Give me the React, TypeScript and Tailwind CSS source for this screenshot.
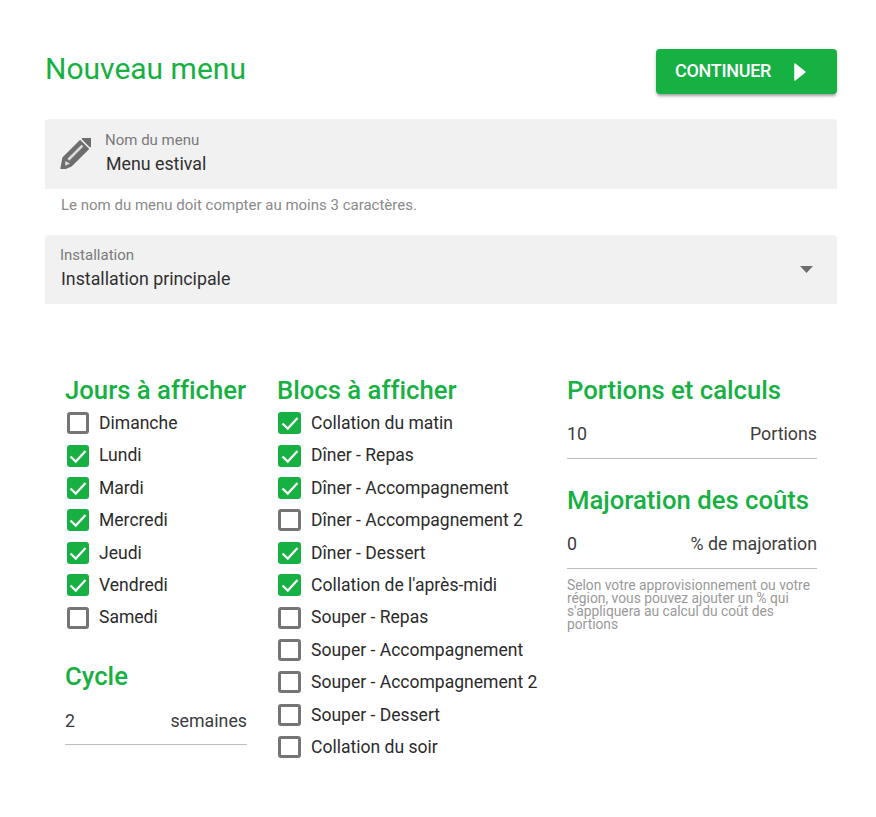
const days: [string, boolean][] = [
  ["Dimanche", false],
  ["Lundi", true],
  ["Mardi", true],
  ["Mercredi", true],
  ["Jeudi", true],
  ["Vendredi", true],
  ["Samedi", false],
];

const blocks: [string, boolean][] = [
  ["Collation du matin", true],
  ["Dîner - Repas", true],
  ["Dîner - Accompagnement", true],
  ["Dîner - Accompagnement 2", false],
  ["Dîner - Dessert", true],
  ["Collation de l'après-midi", true],
  ["Souper - Repas", false],
  ["Souper - Accompagnement", false],
  ["Souper - Accompagnement 2", false],
  ["Souper - Dessert", false],
  ["Collation du soir", false],
];

function Check({ label, checked, wide }: { label: string; checked: boolean; wide?: boolean }) {
  const size = wide ? "ml-px h-[22px] w-[23px]" : "ml-[2px] h-[22px] w-[22px]";
  return (
    <div className="flex h-[32.4px] items-center">
      {checked ? (
        <span className={`flex items-center justify-center rounded-[3px] bg-[#16b043] ${size}`}>
          <svg viewBox="0 0 22 22" className="h-[22px] w-[22px]" fill="none" stroke="#fff" strokeWidth="2.2">
            <path d="M3.5 11.5 L8.8 16.6 L18.5 6" />
          </svg>
        </span>
      ) : (
        <span className={`rounded-[3px] border-[3px] border-[#757575] ${size}`} />
      )}
      <span className="ml-[10px] whitespace-nowrap text-[17.55px] text-[#2b2b2b]">{label}</span>
    </div>
  );
}

function Heading({ children }: { children: string }) {
  return (
    <h2 className="h-[32px] whitespace-nowrap text-[25.7px] leading-[32px] font-medium text-[#16b043] [font-variant-ligatures:none]">
      {children}
    </h2>
  );
}

function NumberField({ value, unit, className }: { value: string; unit: string; className: string }) {
  return (
    <div className={`flex items-start justify-between border-b border-[#bdbdbd] text-[17.8px] leading-[24px] text-[#3c3c3c] ${className}`}>
      <span>{value}</span>
      <span>{unit}</span>
    </div>
  );
}

function Pencil() {
  return (
    <svg viewBox="0 0 31 31" className="mt-[19px] h-[31px] w-[31px] shrink-0">
      <g transform="translate(15.5 15.5) rotate(-45)">
        <rect x="14.5" y="-6.5" width="7.5" height="13" rx="2" fill="#6e6e6e" />
        <path d="M-12 -6.5 H13 V6.5 H-12 L-20.5 3 L-21.5 0 Z" fill="#6e6e6e" />
        <path d="M-9.5 -2 H10.5 V0.6 H-9.5 Z" fill="#dcdcdc" />
        <path d="M-16 1.5 L-12.5 -2 L-11 3.2 Z" fill="#dcdcdc" />
      </g>
    </svg>
  );
}

export default function App() {
  return (
    <div className="h-[817px] w-[876px] bg-white pt-[49px] pr-[39px] pl-[45px] font-['Roboto',sans-serif]">
      <header className="flex h-[45px] items-start justify-between">
        <h1 className="mt-[2px] text-[30px] leading-[36px] font-normal text-[#16b043]">Nouveau menu</h1>
        <button className="flex h-[45px] w-[181px] items-center rounded-[4px] bg-[#16b043] pb-[2px] pl-[19px] text-[18px] font-medium tracking-[-0.3px] text-white shadow-[0_3px_3px_-1px_rgba(0,0,0,0.3),0_1px_4px_rgba(0,0,0,0.15)]">
          CONTINUER
          <svg viewBox="0 0 12 18" className="mt-[2px] ml-[23px] h-[18px] w-[12px]" fill="#fff">
            <path d="M1 1 L11 9 L1 17 Z" stroke="#fff" strokeWidth="1.5" strokeLinejoin="round" />
          </svg>
        </button>
      </header>

      <div className="mt-[25px] flex h-[70px] items-start rounded-t-[4px] bg-[#f1f1f1] pl-[15px]">
        <Pencil />
        <div className="ml-[14px]">
          <div className="mt-[11px] text-[15px] leading-[20px] text-[#7a7a7a]">Nom du menu</div>
          <div className="mt-[2px] ml-px text-[17.8px] leading-[24px] text-[#303030]">Menu estival</div>
        </div>
      </div>
      <p className="mt-[8px] h-[17px] pl-[16px] text-[15px] leading-[17px] text-[#8a8a8a]">Le nom du menu doit compter au moins 3 caractères.</p>

      <div className="mt-[21px] flex h-[69px] items-start justify-between rounded-t-[4px] bg-[#f1f1f1] pr-[24px] pl-[15px]">
        <div>
          <div className="mt-[10px] text-[15px] leading-[20px] text-[#7a7a7a]">Installation</div>
          <div className="mt-[2px] ml-px text-[17.8px] leading-[24px] text-[#303030]">Installation principale</div>
        </div>
        <svg viewBox="0 0 13 7" className="mt-[31px] h-[7px] w-[13px]" fill="#6e6e6e">
          <path d="M0 0 H13 L6.5 7 Z" />
        </svg>
      </div>

      <div className="mt-[70px] flex pl-[20px]">
        <div className="w-[212px]">
          <Heading>Jours à afficher</Heading>
          <div className="mt-px">
            {days.map(([label, checked]) => (
              <Check key={label} label={label} checked={checked} />
            ))}
          </div>
          <div className="mt-[26px] mb-[17px]">
            <Heading>Cycle</Heading>
          </div>
          <NumberField value="2" unit="semaines" className="h-[36px] w-[182px]" />
        </div>
        <div className="w-[290px]">
          <Heading>Blocs à afficher</Heading>
          <div className="mt-px">
            {blocks.map(([label, checked]) => (
              <Check key={label} label={label} checked={checked} wide />
            ))}
          </div>
        </div>
        <div className="w-[250px]">
          <Heading>Portions et calculs</Heading>
          <div className="mt-[16px]">
            <NumberField value="10" unit="Portions" className="h-[37px] w-[250px]" />
          </div>
          <div className="mt-[25px] mb-[16px]">
            <Heading>Majoration des coûts</Heading>
          </div>
          <NumberField value="0" unit="% de majoration" className="h-[37px] w-[250px]" />
          <p className="mt-[10px] text-[13.8px] leading-[13px] text-[#999999]">
            Selon votre approvisionnement ou votre région, vous pouvez ajouter un % qui s'appliquera au calcul du coût des portions
          </p>
        </div>
      </div>
    </div>
  );
}
